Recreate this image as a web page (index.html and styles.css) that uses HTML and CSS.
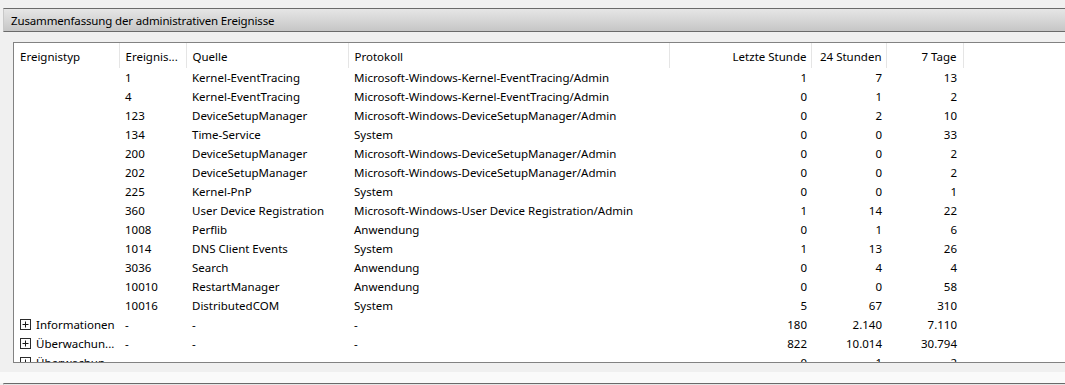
FILE: index.html
```html
<!DOCTYPE html>
<html lang="de">
<head>
  <meta charset="UTF-8" />
  <title>Zusammenfassung der administrativen Ereignisse</title>
  <link rel="stylesheet" href="styles.css">
</head>
<body>
  <!-- Summary section -->
  <div class="section">
    <div class="section-head">Zusammenfassung der administrativen Ereignisse</div>
    <div class="section-body">
      <div class="list">
        <table class="grid">
          <colgroup>
            <col class="c-type"><col class="c-id"><col class="c-src"><col class="c-log">
            <col class="c-num1"><col class="c-num2"><col class="c-num3"><col>
          </colgroup>
          <thead>
            <tr>
              <th>Ereignistyp</th>
              <th>Ereignis...</th>
              <th>Quelle</th>
              <th>Protokoll</th>
              <th class="num">Letzte Stunde</th>
              <th class="num">24 Stunden</th>
              <th class="num last">7 Tage</th>
              <th class="fill"></th>
            </tr>
          </thead>
          <tbody>
            <tr><td></td><td>1</td><td>Kernel-EventTracing</td><td>Microsoft-Windows-Kernel-EventTracing/Admin</td><td class="num">1</td><td class="num">7</td><td class="num last">13</td><td></td></tr>
            <tr><td></td><td>4</td><td>Kernel-EventTracing</td><td>Microsoft-Windows-Kernel-EventTracing/Admin</td><td class="num">0</td><td class="num">1</td><td class="num last">2</td><td></td></tr>
            <tr><td></td><td>123</td><td>DeviceSetupManager</td><td>Microsoft-Windows-DeviceSetupManager/Admin</td><td class="num">0</td><td class="num">2</td><td class="num last">10</td><td></td></tr>
            <tr><td></td><td>134</td><td>Time-Service</td><td>System</td><td class="num">0</td><td class="num">0</td><td class="num last">33</td><td></td></tr>
            <tr><td></td><td>200</td><td>DeviceSetupManager</td><td>Microsoft-Windows-DeviceSetupManager/Admin</td><td class="num">0</td><td class="num">0</td><td class="num last">2</td><td></td></tr>
            <tr><td></td><td>202</td><td>DeviceSetupManager</td><td>Microsoft-Windows-DeviceSetupManager/Admin</td><td class="num">0</td><td class="num">0</td><td class="num last">2</td><td></td></tr>
            <tr><td></td><td>225</td><td>Kernel-PnP</td><td>System</td><td class="num">0</td><td class="num">0</td><td class="num last">1</td><td></td></tr>
            <tr><td></td><td>360</td><td>User Device Registration</td><td>Microsoft-Windows-User Device Registration/Admin</td><td class="num">1</td><td class="num">14</td><td class="num last">22</td><td></td></tr>
            <tr><td></td><td>1008</td><td>Perflib</td><td>Anwendung</td><td class="num">0</td><td class="num">1</td><td class="num last">6</td><td></td></tr>
            <tr><td></td><td>1014</td><td>DNS Client Events</td><td>System</td><td class="num">1</td><td class="num">13</td><td class="num last">26</td><td></td></tr>
            <tr><td></td><td>3036</td><td>Search</td><td>Anwendung</td><td class="num">0</td><td class="num">4</td><td class="num last">4</td><td></td></tr>
            <tr><td></td><td>10010</td><td>RestartManager</td><td>Anwendung</td><td class="num">0</td><td class="num">0</td><td class="num last">58</td><td></td></tr>
            <tr><td></td><td>10016</td><td>DistributedCOM</td><td>System</td><td class="num">5</td><td class="num">67</td><td class="num last">310</td><td></td></tr>
            <tr>
              <td><span class="group"><svg class="expander" width="11" height="11" viewBox="0 0 11 11"><rect x="0.5" y="0.5" width="10" height="10" fill="#fff" stroke="#2b2b2b"/><path d="M2.5 5.5h6M5.5 2.5v6" stroke="#1a1a1a"/></svg>Informationen</span></td>
              <td>-</td><td>-</td><td>-</td><td class="num">180</td><td class="num">2.140</td><td class="num last">7.110</td><td></td>
            </tr>
            <tr>
              <td><span class="group"><svg class="expander" width="11" height="11" viewBox="0 0 11 11"><rect x="0.5" y="0.5" width="10" height="10" fill="#fff" stroke="#2b2b2b"/><path d="M2.5 5.5h6M5.5 2.5v6" stroke="#1a1a1a"/></svg>Überwachun...</span></td>
              <td>-</td><td>-</td><td>-</td><td class="num">822</td><td class="num">10.014</td><td class="num last">30.794</td><td></td>
            </tr>
            <tr>
              <td><span class="group"><svg class="expander" width="11" height="11" viewBox="0 0 11 11"><rect x="0.5" y="0.5" width="10" height="10" fill="#fff" stroke="#2b2b2b"/><path d="M2.5 5.5h6M5.5 2.5v6" stroke="#1a1a1a"/></svg>Überwachun...</span></td>
              <td>-</td><td>-</td><td>-</td><td class="num">0</td><td class="num">1</td><td class="num last">2</td><td></td>
            </tr>
          </tbody>
        </table>
      </div>
    </div>
    <div class="section-foot"></div>
  </div>

  <!-- Next section (cut off) -->
  <div class="section next">
    <div class="section-head"></div>
  </div>
</body>
</html>
```

FILE: styles.css
```css
html, body {
  margin: 0;
  padding: 0;
  overflow: hidden;
}

body {
  font-family: "Noto Sans", "Open Sans", sans-serif;
  font-size: 11.5px;
  color: #000;
  background: #f0f0f0;
  padding-top: 8px;
  padding-left: 3px;
  width: 1200px;
}

.section-head {
  height: 22px;
  line-height: 23px;
  padding-left: 7px;
  border-top: 1px solid #6a6a6a;
  border-bottom: 1px solid #6a6a6a;
  border-left: 1px solid #c8c8c8;
  background: linear-gradient(to bottom, #e6e6e6, #c6c6c6);
  white-space: nowrap;
  letter-spacing: -0.15px;
}

.section-body {
  padding: 10px 0 9px 10px;
}

.list {
  height: 319px;
  overflow: hidden;
  background: #fff;
  border-top: 1px solid #828282;
  border-left: 1px solid #828282;
  border-bottom: 1px solid #828282;
}

.section-foot {
  height: 11px;
  background: #fafafa;
  margin-left: -3px;
}

.grid {
  border-collapse: collapse;
  table-layout: fixed;
  width: 1100px;
}

.c-type { width: 105px; }
.c-id { width: 67px; }
.c-src { width: 162px; }
.c-log { width: 321px; }
.c-num1 { width: 142px; }
.c-num2 { width: 75px; }
.c-num3 { width: 77px; }

.grid th {
  height: 24px;
  padding: 1px 6px 0;
  font-weight: normal;
  text-align: left;
  white-space: nowrap;
  overflow: hidden;
  border-right: 1px solid #e5e5e5;
}

.grid th.fill {
  border-right: none;
}

.grid td {
  height: 19px;
  padding: 0 6px;
  white-space: nowrap;
  overflow: hidden;
}

.grid .num {
  text-align: right;
  padding-right: 4px;
}

.grid .num.last {
  padding-right: 6px;
}

.group {
  display: flex;
  align-items: center;
  gap: 5px;
}

.expander {
  flex: none;
}
```
